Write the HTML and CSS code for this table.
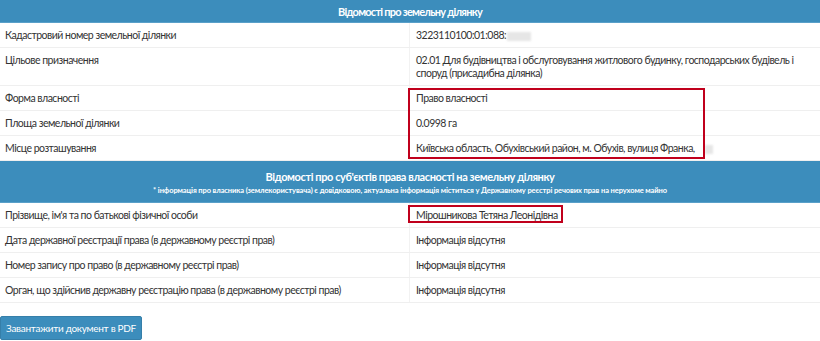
FILE: index.html
```html
<!DOCTYPE html>
<html lang="uk">
<head>
<meta charset="utf-8">
<link rel="stylesheet" href="styles.css">
</head>
<body>
<div class="info">
  <div class="section-head">
    <div class="title title-main">Відомості про земельну ділянку</div>
  </div>
  <div class="row"><div class="label">Кадастровий номер земельної ділянки</div><div class="value">3223110100:01:088:<span class="blur"></span></div></div>
  <div class="row tall"><div class="label">Цільове призначення</div><div class="value">02.01 Для будівництва і обслуговування житлового будинку, господарських будівель і споруд (присадибна ділянка)</div></div>
  <div class="group">
    <div class="row"><div class="label">Форма власності</div><div class="value">Право власності</div></div>
    <div class="row"><div class="label">Площа земельної ділянки</div><div class="value">0.0998 га</div></div>
    <div class="row"><div class="label">Місце розташування</div><div class="value">Київська область, Обухівський район, м. Обухів, вулиця Франка,<span class="blur small"></span></div></div>
    <div class="mark mark-1"></div>
  </div>
  <div class="section-head two">
    <div class="title">Відомості про суб'єктів права власності на земельну ділянку</div>
    <div class="note">* інформація про власника (землекористувача) є довідковою, актуальна інформація міститься у Державному реєстрі речових прав на нерухоме майно</div>
  </div>
  <div class="group">
    <div class="row"><div class="label">Прізвище, ім'я та по батькові фізичної особи</div><div class="value">Мірошникова Тетяна Леонідівна</div></div>
    <div class="mark mark-2"></div>
  </div>
  <div class="row"><div class="label">Дата державної реєстрації права (в державному реєстрі прав)</div><div class="value">Інформація відсутня</div></div>
  <div class="row"><div class="label">Номер запису про право (в державному реєстрі прав)</div><div class="value">Інформація відсутня</div></div>
  <div class="row"><div class="label">Орган, що здійснив державну реєстрацію права (в державному реєстрі прав)</div><div class="value">Інформація відсутня</div></div>
</div>
<div class="actions">
  <button class="btn">Завантажити документ в PDF</button>
</div>
</body>
</html>
```

FILE: styles.css
```css
* { box-sizing: border-box; }
html, body { margin: 0; padding: 0; background: #fff; }
body {
  font-family: Lato, "Open Sans", sans-serif;
  font-size: 10.5px;
  color: #333;
  letter-spacing: -0.5px;
}
.info { width: 820px; }
.section-head {
  background: #3c8dbc;
  color: #fff;
  text-align: center;
  height: 23px;
  display: flex;
  flex-direction: column;
  justify-content: center;
  border-bottom: 1px solid #5aa0c9;
}
.section-head .title { font-weight: bold; font-size: 11px; letter-spacing: -0.4px; }
.section-head .title-main { letter-spacing: -0.75px; }
.section-head.two { height: 42px; padding-top: 1px; gap: 3px; }
.section-head .note { font-size: 7.5px; font-weight: bold; letter-spacing: -0.1px; }
.row {
  display: grid;
  grid-template-columns: 409px 1fr;
  border-bottom: 1px solid #efefef;
  min-height: 24px;
}
.row .label { padding: 6px 5px 5px; line-height: 13px; }
.row .value { padding: 6px 6px 5px; border-left: 1px solid #f2f2f2; line-height: 13px; }
.row.tall { min-height: 38px; }
.group { position: relative; }
.blur {
  display: inline-block;
  width: 24px; height: 9px;
  background: #e6e6e6;
  vertical-align: middle;
  margin-left: 1px;
  filter: blur(1px);
}
.blur.small { width: 8px; margin-left: 10px; }
.mark {
  position: absolute;
  border: 2px solid #c0001c;
  pointer-events: none;
}
.mark-1 { left: 408px; top: 2px; width: 297px; height: 71px; }
.mark-2 { left: 408px; top: 2px; width: 155px; height: 18px; }
.actions { padding: 13px 0 0; }
.btn {
  font-family: Lato, "Open Sans", sans-serif;
  font-size: 10px;
  letter-spacing: -0.3px;
  white-space: nowrap;
  background: #3c8dbc;
  color: #fff;
  border: 1px solid #367fa9;
  border-radius: 2px;
  height: 24px;
  padding: 0;
  width: 142px;
  text-align: center;
}
```
